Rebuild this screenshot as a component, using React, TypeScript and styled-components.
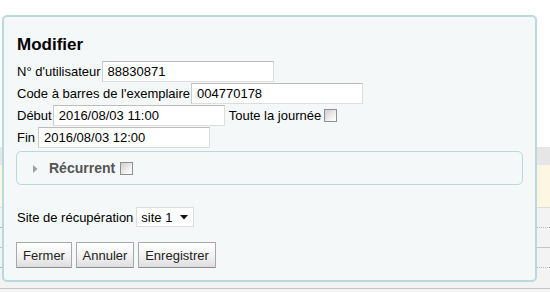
import React from "react";
import styled, { createGlobalStyle } from "styled-components";

const Global = createGlobalStyle`
  html, body { margin: 0; padding: 0; }
  body { font-family: "Liberation Sans", Arial, sans-serif; font-size: 13px; color: #000; background: #fff; }
`;

const Page = styled.div`
  position: relative;
  width: 550px;
  height: 292px;
  overflow: hidden;
  background: #fff;
`;

const Backdrop = styled.div`
  display: flex;
  flex-direction: column;
  padding-top: 147px;
`;

const BgRow = styled.div<{ $h: number; $bg: string; $line?: string }>`
  height: ${(p) => p.$h}px;
  background: ${(p) => p.$bg};
  border-bottom: ${(p) => p.$line || "none"};
  box-sizing: border-box;
`;

const Dialog = styled.div`
  position: absolute;
  left: 2px;
  top: 15px;
  width: 535px;
  height: 267px;
  box-sizing: border-box;
  border: 2px solid #b9d9dc;
  border-radius: 5px;
  background: #f4f8f9;
  padding: 18px 12px 0 12px;
`;

const Title = styled.h1`
  margin: 0 0 5px 0;
  font-size: 17px;
  line-height: 20px;
  font-weight: bold;
  padding-left: 1px;
`;

const Row = styled.div`
  display: flex;
  align-items: center;
  height: 22px;
  padding-left: 1px;
  white-space: nowrap;
`;

const Label = styled.span<{ $gap?: number }>`
  margin-right: ${(p) => p.$gap ?? 1}px;
`;

const TextInput = styled.input`
  box-sizing: border-box;
  width: 172px;
  height: 21px;
  margin: 1px 0 0 0;
  padding: 0 5px;
  font-family: "Liberation Sans", Arial, sans-serif;
  font-size: 13px;
  color: #000;
  background: #fff;
  border: 1px solid #ddd;
  border-top-color: #bbb;
  border-left-color: #ccc;
  outline: none;
`;

const Check = styled.input.attrs({ type: "checkbox" })<{ $gap?: number }>`
  appearance: none;
  box-sizing: border-box;
  width: 13px;
  height: 13px;
  margin: 0 0 0 ${(p) => p.$gap ?? 3}px;
  border: 1px solid #8f8f8f;
  background: linear-gradient(135deg, #cfcfcf 0%, #f4f4f4 70%, #fff 100%);
`;

const Inline = styled.span`
  margin-left: 4px;
`;

const Fieldset = styled.div`
  margin-top: 3px;
  height: 34px;
  box-sizing: border-box;
  border: 1px solid #b9d9dc;
  border-radius: 5px;
  display: flex;
  align-items: center;
  padding-left: 16px;
`;

const Arrow = styled.svg`
  width: 5px;
  height: 8px;
  margin-right: 11px;
  margin-top: 1px;
`;

const Legend = styled.span`
  font-size: 14px;
  font-weight: bold;
  color: #555;
`;

const SelectRow = styled(Row)`
  margin-top: 21px;
  height: 22px;
`;

const SelectBox = styled.div`
  position: relative;
  box-sizing: border-box;
  width: 58px;
  height: 20px;
  border: 1px solid #ddd;
  background: #fff;
  display: flex;
  align-items: center;
  padding-left: 4px;
`;

const Caret = styled.svg`
  position: absolute;
  right: 5px;
  top: 7px;
  width: 8px;
  height: 5px;
`;

const Buttons = styled.div`
  display: flex;
  gap: 4px;
  margin-top: 14px;
`;

const Button = styled.button<{ $w: number }>`
  box-sizing: border-box;
  width: ${(p) => p.$w}px;
  height: 26px;
  padding: 0;
  font-family: "Liberation Sans", Arial, sans-serif;
  font-size: 13px;
  color: #222;
  background: linear-gradient(#ffffff 0%, #f3f3f3 50%, #dedede 100%);
  border: 1px solid #a8a8a8;
  border-bottom-color: #8a8a8a;
  border-radius: 1px;
`;

export default function App() {
  return (
    <Page>
      <Global />
      <Backdrop>
        <BgRow $h={18} $bg="#e6e6e6" />
        <BgRow $h={43} $bg="#fdf6e3" $line="1px solid #dcdcdc" />
        <BgRow $h={20} $bg="#f3f3f3" $line="1px dotted #b5b5b5" />
        <BgRow $h={20} $bg="#f3f3f3" $line="1px solid #c4c4c4" />
        <BgRow $h={20} $bg="#f3f3f3" $line="1px dotted #b5b5b5" />
        <BgRow $h={21} $bg="#f3f3f3" $line="1px solid #c4c4c4" />
        <BgRow $h={10} $bg="#f3f3f3" />
      </Backdrop>
      <Dialog>
        <Title>Modifier</Title>
        <Row>
          <Label>N° d'utilisateur</Label>
          <TextInput defaultValue="88830871" />
        </Row>
        <Row>
          <Label>Code à barres de l'exemplaire</Label>
          <TextInput defaultValue="004770178" />
        </Row>
        <Row>
          <Label>Début</Label>
          <TextInput defaultValue="2016/08/03 11:00" />
          <Inline>Toute la journée</Inline>
          <Check />
        </Row>
        <Row>
          <Label $gap={3}>Fin</Label>
          <TextInput defaultValue="2016/08/03 12:00" />
        </Row>
        <Fieldset>
          <Arrow viewBox="0 0 5 8">
            <path d="M0 0 L4.5 4 L0 8 Z" fill="#a0a0a0" />
          </Arrow>
          <Legend>Récurrent</Legend>
          <Check $gap={5} />
        </Fieldset>
        <SelectRow>
          <Label $gap={3}>Site de récupération</Label>
          <SelectBox>
            site 1
            <Caret viewBox="0 0 8 5">
              <path d="M0 0 L8 0 L4 4.5 Z" fill="#111" />
            </Caret>
          </SelectBox>
        </SelectRow>
        <Buttons>
          <Button $w={56}>Fermer</Button>
          <Button $w={58}>Annuler</Button>
          <Button $w={78}>Enregistrer</Button>
        </Buttons>
      </Dialog>
    </Page>
  );
}
